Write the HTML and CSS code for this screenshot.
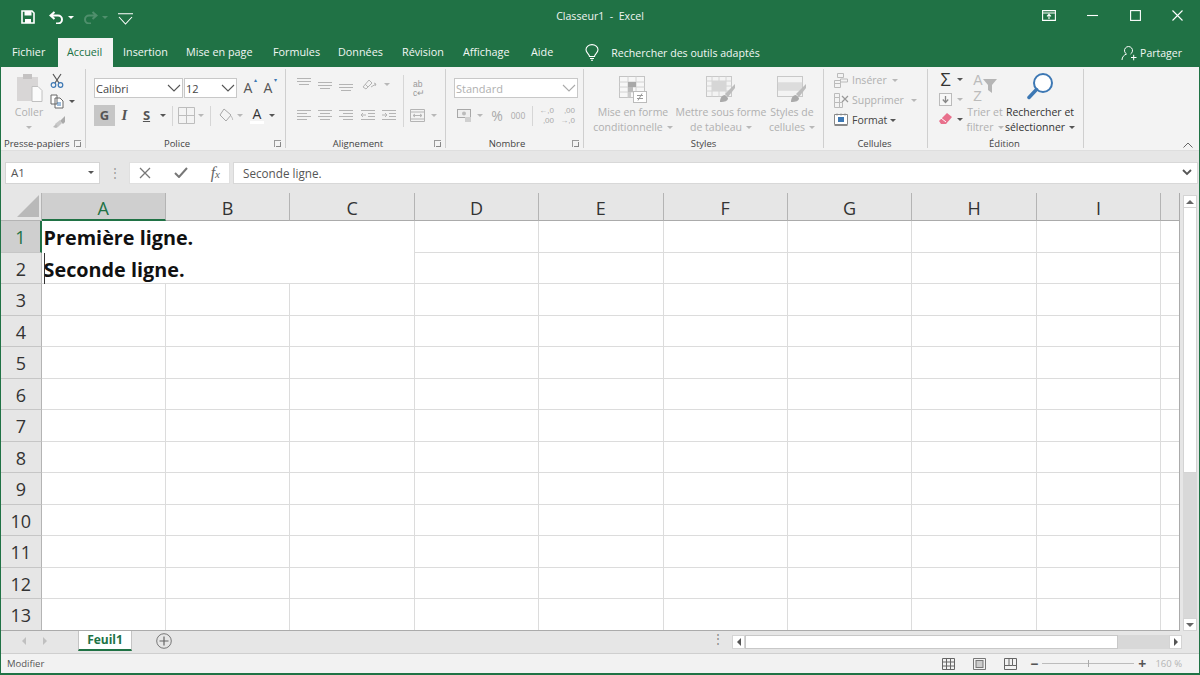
FILE: index.html
```html
<!DOCTYPE html>
<html lang="fr">
<head>
<meta charset="utf-8">
<title>Classeur1 - Excel</title>
<link rel="stylesheet" href="styles.css">
</head>
<body>
<div class="window">
  <header class="titlebar">
    <div class="qat">
      <svg class="ic save" width="14" height="14" viewBox="0 0 14 14"><path d="M1 1h10l2 2v10H1z" fill="none" stroke="#fff" stroke-width="1.6"/><rect x="3.500" y="1" width="7" height="4.500" fill="#fff"/><rect x="4" y="9" width="6" height="4" fill="#fff"/></svg>
      <svg class="ic undo" width="15" height="13" viewBox="0 0 15 13"><path d="M5.500 1 1.500 4.500l4 3.500M2 4.500h7a4 4 0 0 1 0 8H7" fill="none" stroke="#fff" stroke-width="2"/></svg>
      <i class="caret white"></i>
      <svg class="ic redo" width="15" height="13" viewBox="0 0 15 13"><path d="M9.500 1l4 3.500-4 3.500M13 4.500H6a4 4 0 0 0 0 8h2" fill="none" stroke="#4f8f6c" stroke-width="2"/></svg>
      <i class="caret dimgreen"></i>
      <svg class="ic custom" width="15" height="12" viewBox="0 0 15 12"><path d="M0 .7h15M1 4l6.500 7L14 4" fill="none" stroke="#fff" stroke-width="1.100"/></svg>
    </div>
    <div class="doc-title">Classeur1&nbsp; -&nbsp; Excel</div>
    <div class="controls">
      <svg width="14" height="11" viewBox="0 0 14 11"><path d="M.6.6h12.800v9.800H.6zM.6 3h12.800M7 9V4.600M5 6.400l2-2 2 2" fill="none" stroke="#fff" stroke-width="1.100"/></svg>
      <svg width="11" height="11" viewBox="0 0 11 11"><path d="M0 5.500h11" stroke="#fff" stroke-width="1.100"/></svg>
      <svg width="11" height="11" viewBox="0 0 11 11"><rect x=".6" y=".6" width="9.800" height="9.800" fill="none" stroke="#fff" stroke-width="1.100"/></svg>
      <svg width="11" height="11" viewBox="0 0 11 11"><path d="M.5.500l10 10M10.500.5l-10 10" stroke="#fff" stroke-width="1.100"/></svg>
    </div>
  </header>

  <nav class="tabs">
    <span class="tab file">Fichier</span>
    <span class="tab active">Accueil</span>
    <span class="tab">Insertion</span>
    <span class="tab">Mise en page</span>
    <span class="tab">Formules</span>
    <span class="tab">Données</span>
    <span class="tab">Révision</span>
    <span class="tab">Affichage</span>
    <span class="tab">Aide</span>
    <span class="tell">
      <svg width="14" height="17" viewBox="0 0 14 17"><path d="M4.500 12.500C4.500 10 1 9 1 5.800a6 5.200 0 0 1 12 0C13 9 9.500 10 9.500 12.500zM5 14.500h4M6 16.300h2" fill="none" stroke="#fff" stroke-width="1.100"/></svg>
      Rechercher des outils adaptés
    </span>
    <span class="share">
      <svg width="16" height="16" viewBox="0 0 16 16"><path d="M1 15c0-3 2-5 4.500-6A4 4 0 1 1 9.500 9M10 12.500h5.500M12.700 9.800v5.500" fill="none" stroke="#fff" stroke-width="1"/></svg>
      Partager
    </span>
  </nav>

  <section class="ribbon">
    <div class="group g-clip">
      <div class="gbody">
        <div class="big paste">
          <svg width="27" height="30" viewBox="0 0 27 30"><rect x="1" y="4" width="21" height="24" fill="#d8d6d6"/><rect x="7" y="1" width="9" height="5" fill="#c4c2c2"/><path d="M16 13.500h6l4 4v11H16z" fill="#fbfbfb" stroke="#c0c0c0"/></svg>
          <span class="dis">Coller</span>
          <i class="caret grey small-top"></i>
        </div>
        <div class="col clip-tools">
          <svg width="14" height="15" viewBox="0 0 14 15"><path d="M3 1l6 9M11 1 5 10" stroke="#555" stroke-width="1.200" fill="none"/><circle cx="3.500" cy="12" r="2.300" fill="none" stroke="#3d78b4" stroke-width="1.200"/><circle cx="10.500" cy="12" r="2.300" fill="none" stroke="#3d78b4" stroke-width="1.200"/></svg>
          <span class="row-s"><svg width="14" height="15" viewBox="0 0 14 15"><path d="M1 1h6v9H1zM5 4h5l3 3v7H5z" fill="#fff" stroke="#666"/><path d="M7 9h4M7 11h4" stroke="#3d78b4"/></svg><i class="caret dark"></i></span>
          <svg width="14" height="14" viewBox="0 0 14 14"><path d="M13 1 8 6 11 9l2-2z" fill="#aaa"/><path d="M8 5 3 9l3 3 4-4z" fill="#c8c8c8"/><path d="M1 12l3-3 2 3-2 1z" fill="#bbb"/></svg>
        </div>
      </div>
      <div class="glabel">Presse-papiers<i class="launch"></i></div>
    </div>

    <div class="group g-font">
      <div class="gbody col">
        <div class="row font-r1">
          <div class="combo c-font"><span>Calibri</span><svg class="chev" width="14" height="8" viewBox="0 0 14 8"><path d="M1 1l6 6 6-6" fill="none" stroke="#555" stroke-width="1.100"/></svg></div>
          <div class="combo c-size"><span>12</span><svg class="chev" width="14" height="8" viewBox="0 0 14 8"><path d="M1 1l6 6 6-6" fill="none" stroke="#555" stroke-width="1.100"/></svg></div>
          <span class="grow-a">A<sup>▴</sup></span>
          <span class="grow-a shrink">A<sup>▾</sup></span>
        </div>
        <div class="row font-r2">
          <span class="fmt bold on">G</span>
          <span class="fmt ital">I</span>
          <span class="fmt under">S</span>
          <i class="caret dark"></i>
          <b class="vsep"></b>
          <svg width="17" height="17" viewBox="0 0 17 17"><path d="M.5.500h16v16H.5zM8.500.5v16M.5 8.500h16" fill="none" stroke="#bdbdbd"/></svg>
          <i class="caret grey"></i>
          <b class="vsep"></b>
          <svg class="fill" width="15" height="15" viewBox="0 0 15 15"><path d="M5 1l7 6-5 6-6-6z" fill="#f4f4f4" stroke="#a8a8a8"/><path d="M12 8c1 1.500 2 3 1.500 4" stroke="#bbb" fill="none"/></svg>
          <i class="caret grey"></i>
          <span class="font-color">A</span>
          <i class="caret dark"></i>
        </div>
      </div>
      <div class="glabel center">Police<i class="launch"></i></div>
    </div>

    <div class="group g-align">
      <div class="gbody">
        <div class="col align-icons">
          <div class="row align-r">
            <svg class="lines" width="14" height="14" viewBox="0 0 14 14"><path d="M0 1.500h14M0 4.500h14M2 7.500h10"/></svg>
            <svg class="lines" width="14" height="14" viewBox="0 0 14 14"><path d="M0 5.500h14M0 8.500h14M2 11.500h10"/></svg>
            <svg class="lines" width="14" height="14" viewBox="0 0 14 14"><path d="M0 7.500h14M0 10.500h14M2 13.500h10"/></svg>
            <svg class="lines" width="15" height="13" viewBox="0 0 15 13"><path d="M1 9l6-7 3 3-6 6zM3 6l3 3M9 9l5-3M12 5l2 1-1 2"/></svg>
            <i class="caret grey"></i>
          </div>
          <div class="row align-r r2">
            <svg class="lines" width="14" height="11" viewBox="0 0 14 11"><path d="M0 .500h14M0 3.500h10M0 6.500h14M0 9.500h10"/></svg>
            <svg class="lines" width="14" height="11" viewBox="0 0 14 11"><path d="M0 .500h14M2 3.500h10M0 6.500h14M2 9.500h10"/></svg>
            <svg class="lines" width="14" height="11" viewBox="0 0 14 11"><path d="M0 .500h14M4 3.500h10M0 6.500h14M4 9.500h10"/></svg>
            <svg class="lines" width="14" height="11" viewBox="0 0 14 11"><path d="M0 .500h14M7 3.500h7M7 6.500h7M0 9.500h14M5 5H0M2 3 0 5l2 2"/></svg>
            <svg class="lines" width="14" height="11" viewBox="0 0 14 11"><path d="M0 .500h14M7 3.500h7M7 6.500h7M0 9.500h14M0 5h5M3 3l2 2-2 2"/></svg>
          </div>
        </div>
        <b class="vsep tall"></b>
        <div class="col align-wrap">
          <span class="wrap-ab">ab<br>c↵</span>
          <span class="row-s"><svg class="lines" width="15" height="13" viewBox="0 0 15 13"><path d="M.5.500h14v12H.5zM.5 3h14M.5 10h14M3 6.500h9M5 5 3 6.500 5 8M10 5l2 1.500L10 8"/></svg><i class="caret grey"></i></span>
        </div>
      </div>
      <div class="glabel center">Alignement<i class="launch"></i></div>
    </div>

    <div class="group g-num">
      <div class="gbody col">
        <div class="combo c-num"><span class="dis">Standard</span><svg class="chev" width="14" height="8" viewBox="0 0 14 8"><path d="M1 1l6 6 6-6" fill="none" stroke="#aaa" stroke-width="1.100"/></svg></div>
        <div class="row num-r">
          <svg width="15" height="14" viewBox="0 0 15 14"><rect x=".5" y=".5" width="13" height="8" fill="#eee" stroke="#a8a8a8"/><circle cx="7" cy="4.500" r="2" fill="#bbb"/><rect x="8" y="8" width="6" height="5" fill="#d0d0d0"/></svg>
          <i class="caret grey"></i>
          <span class="pct">%</span>
          <span class="mil">000</span>
          <b class="vsep"></b>
          <span class="dec">←,0<br>,00</span>
          <span class="dec">,00<br>→,0</span>
        </div>
      </div>
      <div class="glabel center">Nombre<i class="launch"></i></div>
    </div>

    <div class="group g-styles">
      <div class="gbody">
        <div class="big st st1">
          <svg width="28" height="27" viewBox="0 0 28 27"><rect x=".5" y=".5" width="25" height="21" fill="#f7f7f7" stroke="#c4c4c4"/><path d="M.5 6h25M.5 11h25M.5 16h25M9 .5v21M17 .5v21" stroke="#d2d2d2"/><rect x="9" y="6" width="8" height="5" fill="#a8a8a8"/><rect x="9" y="11" width="5" height="5" fill="#bbb"/><rect x="9" y="16" width="3" height="5" fill="#ccc"/><rect x="14.500" y="15.500" width="13" height="11" fill="#fff" stroke="#bbb"/><path d="M18 19.500h6M18 22.500h6M23 17.500l-4 7" stroke="#999"/></svg>
          <span class="dis">Mise en forme</span>
          <span class="dis">conditionnelle<i class="caret grey in"></i></span>
        </div>
        <div class="big st st2">
          <svg width="30" height="27" viewBox="0 0 30 27"><rect x=".5" y=".5" width="25" height="20" fill="#f3f3f3" stroke="#c8c8c8"/><path d="M.5 5h25M.5 10h25M.5 15h25M6 .5v20M13 .5v20M20 .5v20" stroke="#d4d4d4"/><rect x="6" y="5" width="14" height="10" fill="#d6d6d6"/><path d="M29 8 19 18l3 3 7-9z" fill="#bcbcbc"/><path d="M14 26c0-4 2-7 5-7l3 3c0 3-3 4-8 4z" fill="#aaa"/></svg>
          <span class="dis">Mettre sous forme</span>
          <span class="dis">de tableau<i class="caret grey in"></i></span>
        </div>
        <div class="big st st3">
          <svg width="30" height="27" viewBox="0 0 30 27"><rect x=".5" y=".5" width="25" height="20" fill="#f3f3f3" stroke="#c8c8c8"/><path d="M.5 7h25M.5 14h25" stroke="#d0d0d0"/><rect x="1" y="7" width="24" height="7" fill="#dcdcdc"/><path d="M29 8 19 18l3 3 7-9z" fill="#bcbcbc"/><path d="M14 26c0-4 2-7 5-7l3 3c0 3-3 4-8 4z" fill="#aaa"/></svg>
          <span class="dis">Styles de</span>
          <span class="dis">cellules<i class="caret grey in"></i></span>
        </div>
      </div>
      <div class="glabel center">Styles</div>
    </div>

    <div class="group g-cells">
      <div class="gbody col cell-rows">
        <div class="row cell-r dis"><svg width="14" height="15" viewBox="0 0 14 15"><path d="M3.500.5h6v4h-6zM.5 7.500h6v3h-6zM.5 10.500h6v4h-6zM6.500 6h7v3h-7z" fill="none" stroke="#bbb"/></svg><span>Insérer</span><i class="caret grey"></i></div>
        <div class="row cell-r dis r-del"><svg width="15" height="15" viewBox="0 0 15 15"><path d="M.5.500h5v4h-5zM.5 4.500h5v5h-5zM.5 9.500h5v5h-5zM5.500 9.500h3v5h-3z" fill="none" stroke="#bbb"/><path d="M8 3l6 6M14 3 8 9" stroke="#999" stroke-width="1.200"/></svg><span>Supprimer</span><i class="caret grey"></i></div>
        <div class="row cell-r r-fmt"><svg width="14" height="15" viewBox="0 0 14 15"><path d="M.5 1.500h13v10H.5z" fill="#fff" stroke="#888"/><rect x="4" y="4" width="6" height="5" fill="#3d78b4"/><path d="M3 .5v2M7 .5v2M11 .5v2M.5 12.500h13" stroke="#888"/></svg><span>Format</span><i class="caret dark"></i></div>
      </div>
      <div class="glabel center">Cellules</div>
    </div>

    <div class="group g-edit">
      <div class="gbody">
        <div class="col edit-icons">
          <span class="row-s"><span class="sigma">Σ</span><i class="caret dark"></i></span>
          <span class="row-s"><svg width="13" height="13" viewBox="0 0 13 13"><rect x=".5" y=".5" width="12" height="12" fill="#f7f7f7" stroke="#bbb"/><path d="M6.500 3v6M3.800 6.500l2.700 3 2.700-3" fill="none" stroke="#888" stroke-width="1.300"/></svg><i class="caret grey"></i></span>
          <span class="row-s"><svg width="13" height="12" viewBox="0 0 13 12"><path d="M8 0l5 4-6 7-5 0-2-3z" fill="#e8708c"/><path d="M2 5l5 4" stroke="#fff"/></svg><i class="caret dark"></i></span>
        </div>
        <div class="big sort">
          <span class="az"><span>A<br>Z</span><svg width="14" height="14" viewBox="0 0 14 14"><path d="M0 0h14L9 6v8L5 11V6z" fill="#b5b5b5"/></svg></span>
          <span class="dis">Trier et</span>
          <span class="dis">filtrer<i class="caret grey in"></i></span>
        </div>
        <div class="big find">
          <svg width="27" height="28" viewBox="0 0 27 28"><circle cx="16" cy="11" r="9" fill="#fff" stroke="#3d78b4" stroke-width="2"/><path d="M9.500 17.500 2 25.500" stroke="#3d78b4" stroke-width="3.500" stroke-linecap="round"/></svg>
          <span>Rechercher et</span>
          <span>sélectionner<i class="caret dark in"></i></span>
        </div>
      </div>
      <div class="glabel center">Édition</div>
    </div>

    <div class="collapse"><svg width="10" height="6" viewBox="0 0 10 6"><path d="M.5 5.500 5 1l4.500 4.500" fill="none" stroke="#666"/></svg></div>
  </section>

  <section class="formula">
    <div class="namebox"><span>A1</span><i class="caret dark"></i></div>
    <span class="grip">⋮</span>
    <div class="fx-btns">
      <svg width="12" height="12" viewBox="0 0 12 12"><path d="M1 1l10 10M11 1 1 11" stroke="#777" stroke-width="1.300"/></svg>
      <svg width="14" height="11" viewBox="0 0 14 11"><path d="M1 6l4 4 8-9" fill="none" stroke="#777" stroke-width="2"/></svg>
      <span class="fx">f<small>x</small></span>
    </div>
    <div class="finput"><span>Seconde ligne.</span><svg width="10" height="7" viewBox="0 0 10 7"><path d="M1 1l4 4 4-4" fill="none" stroke="#555" stroke-width="1.800"/></svg></div>
  </section>

  <main class="sheet">
    <div class="gridwrap">
      <div class="grid">
        <div class="corner"><svg width="22" height="22" viewBox="0 0 22 22"><path d="M22 0v22H0z" fill="#b9b9b9"/></svg></div>
        <div class="ch sel">A</div><div class="ch">B</div><div class="ch">C</div><div class="ch">D</div><div class="ch">E</div><div class="ch">F</div><div class="ch">G</div><div class="ch">H</div><div class="ch">I</div><div class="ch"></div>

        <div class="rh sel">1</div>
        <div class="c merged editor"><span>Première ligne.</span></div>
        <div class="c"></div><div class="c"></div><div class="c"></div><div class="c"></div><div class="c"></div><div class="c"></div><div class="c end"></div>

        <div class="rh">2</div>
        <div class="c merged last"><i class="cursor"></i><span>Seconde ligne.</span></div>
        <div class="c"></div><div class="c"></div><div class="c"></div><div class="c"></div><div class="c"></div><div class="c"></div><div class="c end"></div>

        <div class="rh">3</div><div class="c"></div><div class="c"></div><div class="c"></div><div class="c"></div><div class="c"></div><div class="c"></div><div class="c"></div><div class="c"></div><div class="c"></div><div class="c end"></div>
        <div class="rh">4</div><div class="c"></div><div class="c"></div><div class="c"></div><div class="c"></div><div class="c"></div><div class="c"></div><div class="c"></div><div class="c"></div><div class="c"></div><div class="c end"></div>
        <div class="rh">5</div><div class="c"></div><div class="c"></div><div class="c"></div><div class="c"></div><div class="c"></div><div class="c"></div><div class="c"></div><div class="c"></div><div class="c"></div><div class="c end"></div>
        <div class="rh">6</div><div class="c"></div><div class="c"></div><div class="c"></div><div class="c"></div><div class="c"></div><div class="c"></div><div class="c"></div><div class="c"></div><div class="c"></div><div class="c end"></div>
        <div class="rh">7</div><div class="c"></div><div class="c"></div><div class="c"></div><div class="c"></div><div class="c"></div><div class="c"></div><div class="c"></div><div class="c"></div><div class="c"></div><div class="c end"></div>
        <div class="rh">8</div><div class="c"></div><div class="c"></div><div class="c"></div><div class="c"></div><div class="c"></div><div class="c"></div><div class="c"></div><div class="c"></div><div class="c"></div><div class="c end"></div>
        <div class="rh">9</div><div class="c"></div><div class="c"></div><div class="c"></div><div class="c"></div><div class="c"></div><div class="c"></div><div class="c"></div><div class="c"></div><div class="c"></div><div class="c end"></div>
        <div class="rh">10</div><div class="c"></div><div class="c"></div><div class="c"></div><div class="c"></div><div class="c"></div><div class="c"></div><div class="c"></div><div class="c"></div><div class="c"></div><div class="c end"></div>
        <div class="rh">11</div><div class="c"></div><div class="c"></div><div class="c"></div><div class="c"></div><div class="c"></div><div class="c"></div><div class="c"></div><div class="c"></div><div class="c"></div><div class="c end"></div>
        <div class="rh">12</div><div class="c"></div><div class="c"></div><div class="c"></div><div class="c"></div><div class="c"></div><div class="c"></div><div class="c"></div><div class="c"></div><div class="c"></div><div class="c end"></div>
        <div class="rh">13</div><div class="c"></div><div class="c"></div><div class="c"></div><div class="c"></div><div class="c"></div><div class="c"></div><div class="c"></div><div class="c"></div><div class="c"></div><div class="c end"></div>
      </div>
      <div class="vscroll">
        <span class="sbtn"><i class="tri up"></i></span>
        <span class="thumb"></span>
        <span class="strack"></span>
        <span class="sbtn"><i class="tri down"></i></span>
      </div>
    </div>
  </main>

  <section class="sheetbar">
    <div class="navs"><i class="tri left"></i><i class="tri right"></i></div>
    <div class="sheet-tab">Feuil1</div>
    <svg class="addsheet" width="16" height="16" viewBox="0 0 16 16"><circle cx="8" cy="8" r="7.300" fill="none" stroke="#777"/><path d="M8 3.500v9M3.500 8h9" stroke="#666" stroke-width="1.200"/></svg>
    <span class="hgrip">⋮</span>
    <div class="hscroll">
      <span class="hbtn"><i class="tri dleft"></i></span>
      <span class="hthumb"></span>
      <span class="htrack"></span>
      <span class="hbtn"><i class="tri dright"></i></span>
    </div>
  </section>

  <footer class="status">
    <span class="mode">Modifier</span>
    <div class="views">
      <svg width="13" height="12" viewBox="0 0 13 12"><path d="M.5.500h12v11H.5zM4.500.5v11M8.500.5v11M.5 4h12M.5 8h12" fill="none" stroke="#666"/></svg>
      <svg width="13" height="12" viewBox="0 0 13 12"><path d="M.5.500h12v11H.5z" fill="none" stroke="#777"/><rect x="3" y="2.500" width="7" height="7" fill="#ccc" stroke="#777"/></svg>
      <svg width="13" height="12" viewBox="0 0 13 12"><path d="M.5 11.500V.5h12v11zM5 .5v7h3.500V.5M.5 7.500H5M8.500 7.500h4" fill="none" stroke="#666"/></svg>
    </div>
    <div class="zoom">
      <span class="zsign">−</span>
      <span class="zline"><i></i></span>
      <span class="zsign">+</span>
      <span class="zpct">160 %</span>
    </div>
  </footer>
</div>
</body>
</html>
```

FILE: styles.css
```css
* { box-sizing: border-box; }
html, body { margin: 0; padding: 0; }
body { width: 1200px; height: 675px; overflow: hidden; font-family: "Open Sans", "Noto Sans", sans-serif; font-size: 10.5px; color: #444; }
i, b { display: block; font-style: normal; }
svg { display: block; flex: none; }

.window { width: 1200px; height: 675px; background: #e6e6e6; border: solid #207245; border-width: 0 1px 2px 1px; display: flex; flex-direction: column; }

.titlebar { height: 38px; flex: none; background: #207245; color: #fff; margin: 0 -1px; display: grid; grid-template-columns: 1fr auto 1fr; align-items: center; }
.qat { display: flex; align-items: center; padding-left: 21px; padding-bottom: 4px; }
.qat .undo { margin-left: 14px; }
.qat .caret { margin-left: 4px; }
.qat .redo { margin-left: 9px; }
.qat .custom { margin-left: 10px; margin-top: 4px; }
.doc-title { font-size: 10.6px; color: #f0f5f2; padding-bottom: 6px; }
.controls { display: flex; justify-content: flex-end; align-items: center; gap: 31.5px; padding: 0 17px 8px 0; }

.caret { width: 0; height: 0; border-left: 3px solid transparent; border-right: 3px solid transparent; border-top: 3px solid #555; flex: none; }
.caret.white { border-top-color: #fff; }
.caret.dimgreen { border-top-color: #4f8f6c; }
.caret.grey { border-top-color: #b8b8b8; }
.caret.dark { border-top-color: #555; }
.caret.in { display: inline-block; margin-left: 4px; vertical-align: 2px; }

.tabs { height: 29px; flex: none; margin: 0 -1px; background: #207245; display: flex; align-items: flex-end; padding-left: 2px; color: #f2f7f4; font-size: 10.8px; }
.tab { height: 29px; line-height: 28px; padding: 0 10px; white-space: nowrap; }
.tab.file { width: 56px; }
.tab.active { background: #f3f3f3; color: #207245; width: 55px; padding: 0 0 0 9px; }
.tab:nth-child(3) { width: 63px; }
.tab:nth-child(4) { width: 87px; }
.tab:nth-child(5) { width: 65px; }
.tab:nth-child(6) { width: 64px; }
.tab:nth-child(7) { width: 61px; }
.tab:nth-child(8) { width: 68px; }
.tell { display: flex; align-items: center; gap: 12px; height: 29px; margin-left: 22px; font-size: 10.6px; }
.share { display: flex; align-items: center; gap: 3px; height: 29px; margin-left: auto; margin-right: 18px; padding-top: 1px; font-size: 10.5px; }

.ribbon { height: 84px; flex: none; background: #f3f3f3; display: flex; position: relative; border-bottom: 1px solid #dedede; }
.group { height: 79px; margin-top: 2px; border-right: 1px solid #cfcfcf; position: relative; flex: none; }
.gbody { height: 67px; display: flex; }
.gbody.col { flex-direction: column; }
.glabel { height: 12px; line-height: 16px; font-size: 9.5px; color: #444; white-space: nowrap; position: relative; padding-left: 3px; }
.glabel.center { text-align: center; padding-left: 0; }
.launch { position: absolute; right: 4px; top: 4px; width: 7px; height: 7px; border-left: 1px solid #999; border-top: 1px solid #999; }
.launch::after { content: ""; position: absolute; right: 0; bottom: 0; width: 4px; height: 4px; border-right: 1px solid #888; border-bottom: 1px solid #888; }
.g-font .glabel { padding-right: 25px; }
.g-align .glabel { padding-right: 15px; }
.g-num .glabel { padding-right: 23px; }
.g-cells .glabel, .g-edit .glabel { padding-right: 2px; }

.col { display: flex; flex-direction: column; }
.row { display: flex; align-items: center; }
.row-s { display: flex; align-items: center; gap: 5px; }
.dis { color: #b0b0b0; }
.big { display: flex; flex-direction: column; align-items: center; font-size: 10.5px; line-height: 15px; white-space: nowrap; }

.g-clip { width: 85px; }
.paste { width: 46px; margin-left: 5px; padding-top: 4px; }
.paste span { margin-top: 2px; }
.paste .caret { margin-top: 6px; }
.clip-tools { padding-top: 4px; margin-left: -2px; gap: 6px; }
.clip-tools > svg:last-child { margin-left: 2px; }

.g-font { width: 200px; padding-left: 8px; }
.font-r1 { margin-top: 9px; height: 20px; gap: 1px; }
.combo { height: 20px; background: #fff; border: 1px solid #c8c8c8; display: flex; align-items: center; justify-content: space-between; padding: 0 1px; font-size: 11px; flex: none; }
.c-font { width: 89px; }
.c-size { width: 53px; }
.grow-a { font-size: 14px; color: #555; width: 20px; text-align: center; position: relative; line-height: 20px; }
.grow-a.shrink { margin-left: -1px; }
.grow-a sup { position: absolute; font-size: 6px; top: -4px; right: 1px; color: #3d78b4; line-height: 12px; }
.font-r2 { margin-top: 7px; height: 21px; }
.fmt { width: 21px; height: 21px; line-height: 21px; text-align: center; font-size: 13px; font-weight: 700; color: #555; }
.fmt.on { background: #c6c6c6; }
.fmt.ital { font-family: "Liberation Serif", serif; font-style: italic; font-size: 15px; margin-left: -1px; margin-right: 1px; }
.fmt.under { text-decoration: underline; }
.font-r2 .caret { margin-left: 3px; }
.vsep { width: 1px; height: 20px; background: #d6d6d6; margin: 0 5px 0 6px; flex: none; }
.font-r2 .fill { margin-left: 3px; }
.font-r2 .font-color { font-size: 14px; color: #333; margin-left: 7px; border-bottom: 3px solid #fff; line-height: 14px; width: 14px; text-align: center; }
.font-r2 .font-color + .caret { margin-left: 5px; }

.g-align { width: 160px; }
.align-icons { padding: 5.5px 0 0 11px; width: 117px; }
.align-r { gap: 7px; height: 19px; }
.align-r svg:nth-child(4) { margin-left: 2px; }
.align-r.r2 { margin-top: 12px; gap: 7px; }
.align-r.r2 svg:nth-child(4) { margin-left: 1px; }
.lines { fill: none; stroke: #b4b4b4; stroke-width: 1; }
.vsep.tall { height: 52px; margin: 6px 6px 0 0; }
.align-wrap { padding-top: 11px; gap: 11px; }
.wrap-ab { font-size: 8.5px; line-height: 9px; color: #999; padding-left: 3px; font-family: "Liberation Sans", sans-serif; }
.align-wrap .row-s { gap: 6px; }

.g-num { width: 138px; padding-left: 8px; }
.c-num { width: 124px; margin-top: 9px; }
.num-r { margin-top: 7px; height: 21px; padding-left: 3px; }
.num-r .caret { margin-left: 5px; }
.pct { font-size: 14px; color: #aaa; margin-left: 7px; width: 14px; text-align: center; }
.mil { font-size: 8.5px; color: #aaa; margin-left: 6px; width: 16px; text-align: center; }
.num-r .vsep { margin: 0 6px; }
.dec { font-family: "Liberation Sans", sans-serif; font-size: 8px; line-height: 10px; color: #aaa; text-align: right; width: 15px; margin-right: 6px; white-space: nowrap; }

.g-styles { width: 240px; }
.g-styles .gbody { padding-top: 7px; }
.st svg { margin-bottom: 2px; height: 27px; }
.st span { height: 15px; }
.st1 { width: 92px; margin-left: 3px; }
.st2 { width: 84px; }
.st3 { width: 58px; }

.g-cells { width: 104px; }
.cell-rows { padding: 1px 0 0 10px; }
.cell-r { height: 20px; gap: 4px; font-size: 10.5px; white-space: nowrap; }
.cell-r .caret { margin-left: 1px; }
.r-del .caret { margin-left: 3px; }
.r-del svg { margin-right: -1px; }
.r-fmt { color: #444; }
.r-fmt .caret { margin-left: -1px; }

.g-edit { width: 156px; }
.edit-icons { padding: 0 0 0 11px; width: 40px; flex: none; }
.edit-icons .row-s { height: 20px; gap: 5px; white-space: nowrap; }
.sigma { font-size: 18px; color: #333; width: 13px; line-height: 20px; text-align: center; }
.sort { width: 34px; flex: none; }
.az { display: flex; height: 33px; font-family: "Liberation Sans", sans-serif; font-size: 14px; line-height: 16px; color: #bbb; padding-top: 3px; align-items: flex-start; }
.az svg { margin-top: 7px; }
.sort .dis:nth-child(2) { margin-top: 3px; }
.sort span.dis { height: 15px; }
.find { width: 70px; margin-left: 3px; color: #333; flex: none; }
.find svg { margin: 3px 0 5px; height: 28px; }
.find span { height: 15px; }

.collapse { position: absolute; right: 6px; bottom: 2px; }

.formula { height: 41px; flex: none; display: flex; align-items: center; padding: 2px 1px 0 4px; background: #e6e6e6; }
.namebox { width: 95px; height: 22px; background: #fff; border: 1px solid #d4d4d4; display: flex; align-items: center; justify-content: space-between; padding: 0 5px; font-size: 11.5px; color: #555; flex: none; }
.grip { width: 29px; text-align: center; color: #999; font-size: 12px; flex: none; }
.fx-btns { width: 101px; height: 22px; background: #fff; border: 1px solid #e0e0e0; display: flex; align-items: center; justify-content: space-between; padding: 0 9px 0 9px; flex: none; }
.fx { font-family: "Liberation Serif", serif; font-style: italic; font-size: 16px; color: #666; }
.fx small { font-size: 11px; }
.finput { flex: 1; margin-left: 3px; height: 22px; background: #fff; border: 1px solid #d8d8d8; display: flex; align-items: center; justify-content: space-between; padding: 0 5px 0 9px; font-size: 11.7px; color: #555; }

.sheet { height: 439px; flex: none; background: #e6e6e6; padding-top: 1px; }
.gridwrap { display: flex; height: 100%; }
.grid { width: 1179px; flex: none; display: grid; grid-template-columns: 40.6px repeat(9, 124.4px) 18.8px; grid-template-rows: 28px repeat(13, 31.5px); background: #fff; overflow: hidden; border-right: 1px solid #ababab; border-bottom: 1px solid #ababab; }
.corner { background: #e6e6e6; display: flex; justify-content: flex-end; align-items: flex-end; padding: 0 2px 3px 0; border-right: 1px solid #b4b4b4; border-bottom: 1px solid #b4b4b4; }
.ch { background: #e6e6e6; text-align: center; font-size: 18px; line-height: 30px; color: #333; border-right: 1px solid #b4b4b4; border-bottom: 1px solid #ababab; overflow: hidden; }
.ch.sel { background: #cfcfcf; color: #207245; border-bottom: 2px solid #207245; }
.rh { background: #e6e6e6; text-align: center; font-size: 18px; line-height: 33px; color: #333; border-right: 1px solid #b4b4b4; border-bottom: 1px solid #c6c6c6; overflow: hidden; }
.rh.sel { background: #cfcfcf; color: #207245; border-right: 2px solid #207245; }
.c { border-right: 1px solid #dcdcdc; border-bottom: 1px solid #dcdcdc; background: #fff; }
.merged { grid-column: 2 / span 3; border-bottom: 0; padding: 1px 0 0 2px; font-weight: 700; font-size: 19.8px; line-height: 31px; color: #111; white-space: nowrap; position: relative; }
.merged.last { border-bottom: 1px solid #dcdcdc; }
.c.end { border-right: 0; }
.cursor { position: absolute; left: 2px; top: 0; width: 1px; height: 31px; background: #333; }

.vscroll { flex: 1; display: flex; flex-direction: column; padding: 2px 2px 0 3px; }
.sbtn { height: 13px; background: #fff; border: 1px solid #d4d4d4; display: flex; align-items: center; justify-content: center; flex: none; }
.thumb { height: 265px; background: #fff; border: 1px solid #d4d4d4; border-top: 0; flex: none; }
.strack { flex: 1; background: #d8d8d8; }
.tri { width: 0; height: 0; flex: none; }
.tri.up { border-left: 4px solid transparent; border-right: 4px solid transparent; border-bottom: 4px solid #666; }
.tri.down { border-left: 4px solid transparent; border-right: 4px solid transparent; border-top: 4px solid #666; }
.tri.left { border-top: 4px solid transparent; border-bottom: 4px solid transparent; border-right: 4px solid #c0c0c0; }
.tri.right { border-top: 4px solid transparent; border-bottom: 4px solid transparent; border-left: 4px solid #c0c0c0; }
.tri.dleft { border-top: 4px solid transparent; border-bottom: 4px solid transparent; border-right: 4px solid #555; }
.tri.dright { border-top: 4px solid transparent; border-bottom: 4px solid transparent; border-left: 4px solid #555; }

.sheetbar { height: 23px; flex: none; background: #e6e6e6; display: flex; align-items: flex-start; border-bottom: 1px solid #cfcfcf; }
.navs { width: 77px; height: 20px; display: flex; align-items: center; gap: 17px; padding-left: 21px; flex: none; }
.sheet-tab { width: 54px; height: 20px; background: #fff; border-bottom: 2px solid #207245; border-left: 1px solid #c4c4c4; border-right: 1px solid #c4c4c4; color: #207245; font-weight: 700; font-size: 12px; line-height: 17px; text-align: center; flex: none; }
.addsheet { margin: 2px 0 0 24px; }
.hgrip { width: 12px; margin-left: 540px; color: #888; font-size: 12px; line-height: 16px; text-align: center; height: 20px; flex: none; }
.hscroll { margin-left: 8px; margin-top: 4px; width: 450px; height: 14px; display: flex; flex: none; }
.hbtn { width: 13px; background: #fff; border: 1px solid #d4d4d4; display: flex; align-items: center; justify-content: center; flex: none; }
.hthumb { width: 373px; background: #fff; border: 1px solid #c8c8c8; flex: none; }
.htrack { flex: 1; background: #d8d8d8; }

.status { flex: 1; min-height: 0; background: #f2f2f2; display: flex; align-items: center; padding: 0 17px 0 6px; }
.mode { font-size: 9.5px; color: #555; }
.views { margin-left: auto; display: flex; gap: 18px; margin-right: 12px; }
.zoom { display: flex; align-items: center; }
.zsign { font-size: 14px; line-height: 14px; font-weight: 700; color: #555; width: 10px; text-align: center; }
.zline { width: 92px; height: 1px; background: #bcbcbc; margin: 0 3px; position: relative; }
.zline i { position: absolute; left: 46px; top: -3px; width: 1px; height: 7px; background: #aaa; }
.zpct { color: #b5b5b5; font-size: 9.5px; margin-left: 8px; white-space: nowrap; }
```
